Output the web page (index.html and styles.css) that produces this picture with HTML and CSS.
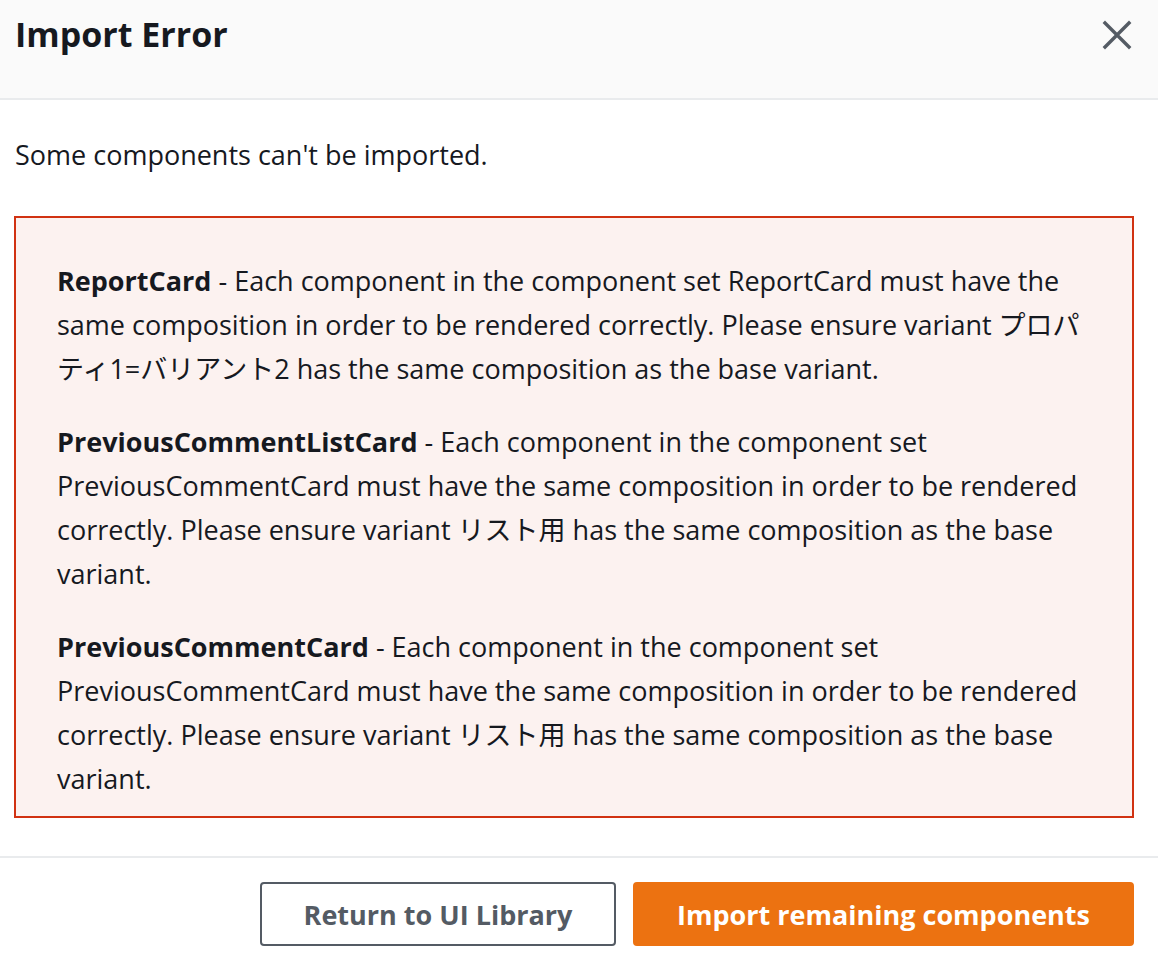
FILE: index.html
```html
<!DOCTYPE html>
<html lang="en">
<head>
<meta charset="utf-8">
<title>Import Error</title>
<link rel="stylesheet" href="styles.css">
</head>
<body>
<div class="modal">
  <header class="modal-header">
    <h1 class="title">Import Error</h1>
    <button class="close" aria-label="Close">
      <svg width="30" height="30" viewBox="0 0 30 30"><path d="M3 3 L27 27 M27 3 L3 27" stroke="#545b64" stroke-width="3.4" fill="none" stroke-linecap="square"/></svg>
    </button>
  </header>
  <div class="modal-body">
    <p class="intro">Some components can't be imported.</p>
    <div class="error-box">
      <p class="err"><strong>ReportCard</strong> - Each component in the component set ReportCard must have the same composition in order to be rendered correctly. Please ensure variant プロパティ1=バリアント2 has the same composition as the base variant.</p>
      <p class="err"><strong>PreviousCommentListCard</strong> - Each component in the component set PreviousCommentCard must have the same composition in order to be rendered correctly. Please ensure variant リスト用 has the same composition as the base variant.</p>
      <p class="err"><strong>PreviousCommentCard</strong> - Each component in the component set PreviousCommentCard must have the same composition in order to be rendered correctly. Please ensure variant リスト用 has the same composition as the base variant.</p>
    </div>
  </div>
  <footer class="modal-footer">
    <button class="btn btn-normal">Return to UI Library</button>
    <button class="btn btn-primary">Import remaining components</button>
  </footer>
</div>
</body>
</html>
```
FILE: styles.css
```css
html, body {
  margin: 0;
  padding: 0;
  background: #ffffff;
}
body {
  font-family: "Open Sans", "Noto Sans CJK JP", sans-serif;
  color: #16191f;
  width: 1158px;
}
.modal {
  display: flex;
  flex-direction: column;
}
.modal-header {
  background: #fafafa;
  height: 98px;
  border-bottom: 2px solid #e9ebed;
  display: flex;
  justify-content: space-between;
  align-items: flex-start;
  padding: 0 26px 0 15px;
}
.title {
  margin: 12px 0 0 0;
  font-size: 34px;
  line-height: 44px;
  font-weight: 700;
  color: #16191f;
}
.close {
  border: none;
  background: transparent;
  padding: 0;
  margin-top: 20px;
  width: 30px;
  height: 30px;
  cursor: pointer;
}
.close svg { display: block; }
.modal-body {
  padding: 0 24px 38px 14px;
}
.intro {
  margin: 33px 0 0 1px;
  font-size: 27px;
  line-height: 44px;
}
.error-box {
  margin-top: 39px;
  border: 2px solid #d13212;
  background: #fcf2f0;
  padding: 41px 38px 15px 41px;
  display: flex;
  flex-direction: column;
  gap: 29px;
}
.err {
  margin: 0;
  font-size: 27px;
  line-height: 44px;
}
.err strong { font-weight: 700; }
.modal-footer {
  border-top: 2px solid #e9ebed;
  display: flex;
  justify-content: flex-end;
  gap: 17px;
  padding: 24px 24px 14px 0;
}
.btn {
  font-family: "Open Sans", sans-serif;
  font-weight: 700;
  font-size: 27px;
  height: 64px;
  border-radius: 4px;
  cursor: pointer;
}
.btn-normal {
  width: 356px;
  background: #ffffff;
  border: 2px solid #545b64;
  color: #545b64;
}
.btn-primary {
  width: 501px;
  background: #ec7211;
  border: 2px solid #ec7211;
  color: #ffffff;
}
```
